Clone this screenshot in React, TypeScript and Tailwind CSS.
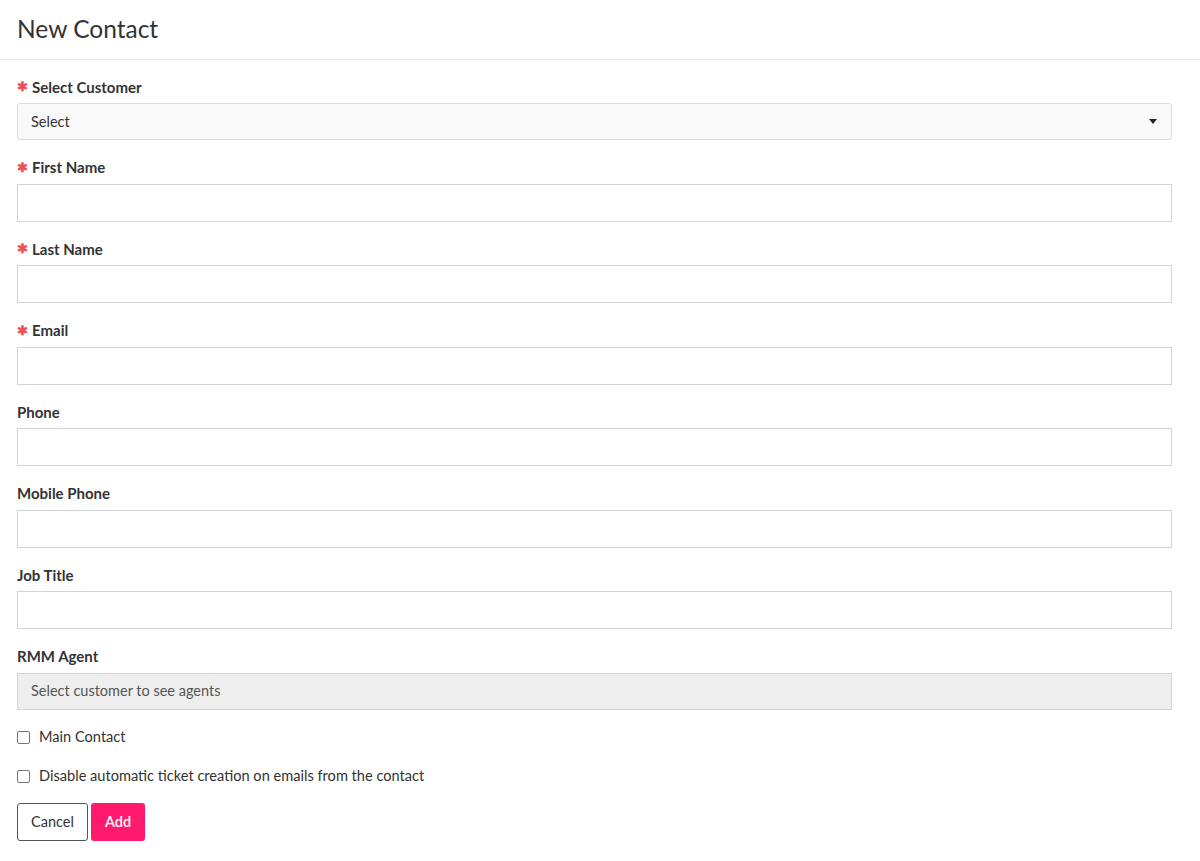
import React from "react";

const Req = () => <span className="text-[#f0505a] mr-[4px] text-[13px] font-bold">✱</span>;

function Field({ label, required, children }: { label: string; required?: boolean; children: React.ReactNode }) {
  return (
    <div className="mb-[17.5px]">
      <div className="flex items-center h-[20px] mb-[6px] text-[15px] font-bold text-[#333]">
        {required && <Req />}
        {label}
      </div>
      {children}
    </div>
  );
}

const TextInput = () => (
  <input type="text" className="block w-full h-[38px] border border-[#d2d4dc] bg-white outline-none px-[13px] text-[14.5px]" />
);

export default function App() {
  return (
    <div className="bg-white min-h-screen text-[#333]" style={{ fontFamily: "Lato, 'Open Sans', sans-serif" }}>
      <div className="h-[60px] border-b border-[#e4e4e4] flex items-center px-[17px]">
        <h1 className="text-[24.5px] font-normal text-[#333] leading-none">New Contact</h1>
      </div>
      <div className="pl-[17px] pr-[28px] pt-[17px]">
        <Field label="Select Customer" required>
          <div className="h-[37px] bg-[#f9f9f9] border border-[#dcdcdc] rounded-[3px] flex items-center justify-between px-[13px] text-[14.5px] text-[#333]">
            <span>Select</span>
            <svg width="8" height="5" viewBox="0 0 8 5" className="mr-[1px]">
              <path d="M0 0 L8 0 L4 5 Z" fill="#222" />
            </svg>
          </div>
        </Field>
        <Field label="First Name" required><TextInput /></Field>
        <Field label="Last Name" required><TextInput /></Field>
        <Field label="Email" required><TextInput /></Field>
        <Field label="Phone"><TextInput /></Field>
        <Field label="Mobile Phone"><TextInput /></Field>
        <Field label="Job Title"><TextInput /></Field>
        <Field label="RMM Agent">
          <div className="h-[37px] bg-[#eeeeee] border border-[#d2d4dc] flex items-center px-[13px] text-[14.5px] text-[#555]">
            Select customer to see agents
          </div>
        </Field>
        <div className="flex flex-col gap-[19px] mt-0">
          <label className="flex items-center h-[20px] text-[14.6px] text-[#333]">
            <span className="w-[13px] h-[13px] border border-[#767676] rounded-[2px] mr-[9px] bg-white" />
            Main Contact
          </label>
          <label className="flex items-center h-[20px] text-[14.6px] text-[#333]">
            <span className="w-[13px] h-[13px] border border-[#767676] rounded-[2px] mr-[9px] bg-white" />
            Disable automatic ticket creation on emails from the contact
          </label>
        </div>
        <div className="flex gap-[3px] mt-[17px]">
          <button className="h-[38px] w-[71px] border border-[#555] rounded-[3px] bg-white text-[14.5px] text-[#333]">Cancel</button>
          <button className="h-[38px] w-[54px] rounded-[3px] bg-[#ff1a6e] text-white text-[14.5px] font-semibold">Add</button>
        </div>
      </div>
    </div>
  );
}
